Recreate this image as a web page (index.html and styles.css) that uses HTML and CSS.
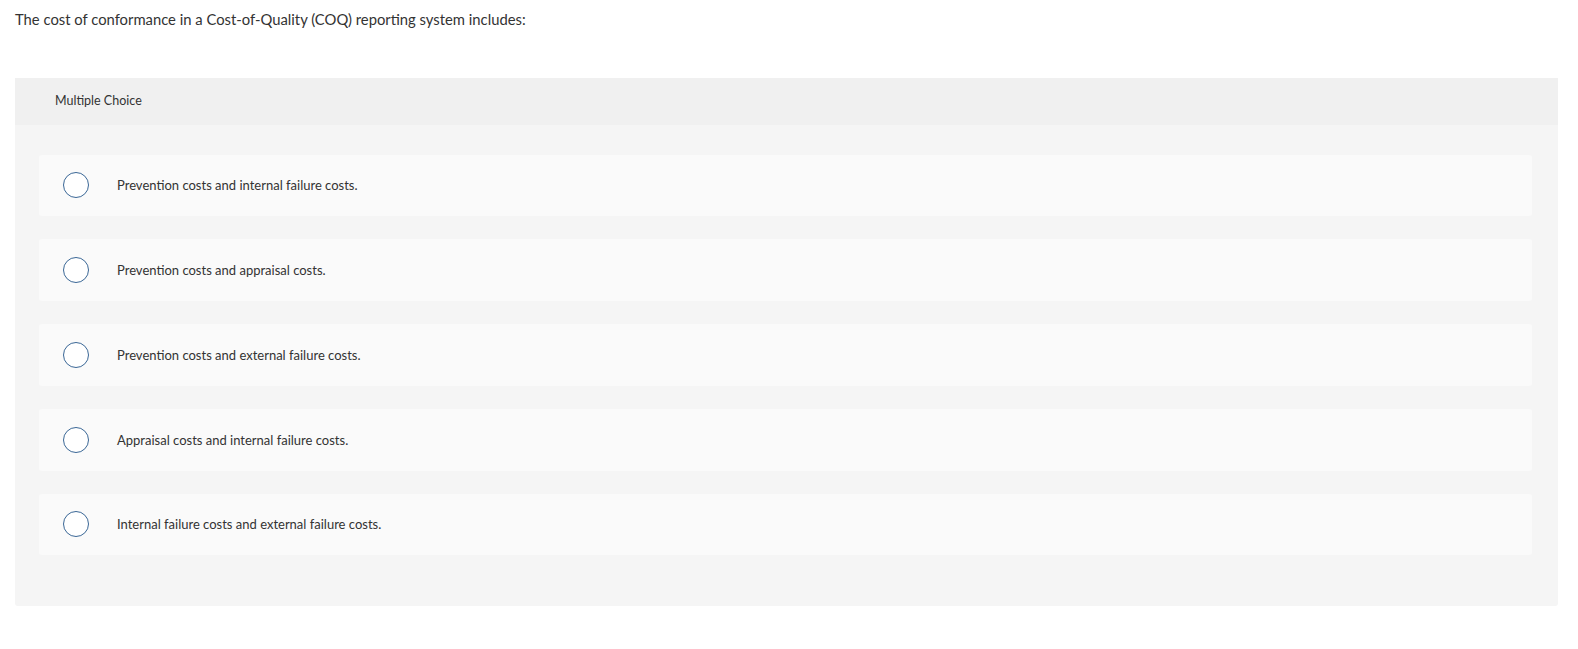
FILE: index.html
```html
<!DOCTYPE html>
<html lang="en">
<head>
<meta charset="utf-8">
<title>Multiple Choice</title>
<link rel="stylesheet" href="styles.css">
</head>
<body>
<div class="question">The cost of conformance in a Cost-of-Quality (COQ) reporting system includes:</div>
<section class="panel">
  <header class="panel-head">Multiple Choice</header>
  <div class="options">
    <label class="option"><span class="radio"></span><span class="opt-text">Prevention costs and internal failure costs.</span></label>
    <label class="option"><span class="radio"></span><span class="opt-text">Prevention costs and appraisal costs.</span></label>
    <label class="option"><span class="radio"></span><span class="opt-text">Prevention costs and external failure costs.</span></label>
    <label class="option"><span class="radio"></span><span class="opt-text">Appraisal costs and internal failure costs.</span></label>
    <label class="option"><span class="radio"></span><span class="opt-text">Internal failure costs and external failure costs.</span></label>
  </div>
</section>
</body>
</html>
```
FILE: styles.css
```css
html, body {
  margin: 0;
  padding: 0;
  background: #ffffff;
}
body {
  font-family: "Lato", "Open Sans", sans-serif;
  color: #333333;
  padding: 0 20px 0 15px;
}
.question {
  font-size: 14.8px;
  line-height: 18px;
  padding-top: 10px;
  height: 78px;
  box-sizing: border-box;
}
.panel {
  width: 1543px;
  background: #f5f5f5;
  border-radius: 0 0 3px 3px;
  padding-bottom: 51px;
}
.panel-head {
  background: #f0f0f0;
  height: 47px;
  box-sizing: border-box;
  padding: 15px 0 0 40px;
  font-size: 12.5px;
  line-height: 16px;
}
.options {
  display: flex;
  flex-direction: column;
  gap: 23px;
  padding: 29.5px 26px 0 24px;
}
.option {
  display: flex;
  align-items: center;
  height: 61.75px;
  background: #fafafa;
  border-radius: 3px;
}
.radio {
  width: 24px;
  height: 24px;
  border: 1.5px solid #3a6796;
  border-radius: 50%;
  background: #ffffff;
  margin-left: 24px;
  flex: none;
}
.opt-text {
  margin-left: 28px;
  font-size: 13px;
  line-height: 16px;
}
```
